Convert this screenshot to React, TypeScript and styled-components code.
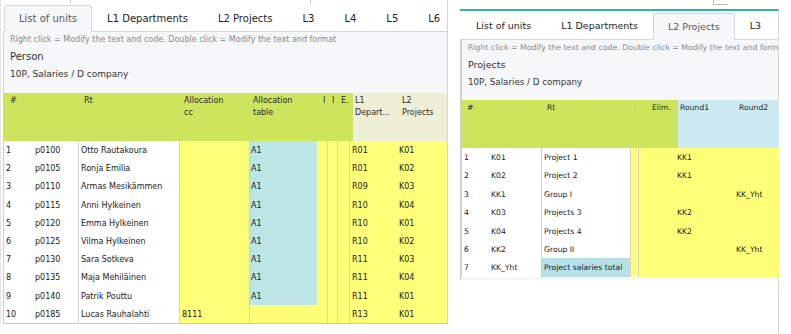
import React from 'react'
import styled, { createGlobalStyle } from 'styled-components'

const GlobalStyle = createGlobalStyle`
  html, body {
    margin: 0;
    padding: 0;
    background: #fff;
  }
  body {
    font-family: 'DejaVu Sans', Verdana, sans-serif;
    color: #222;
  }
`

const colors = {
  green: '#cde55c',
  yellow: '#ffff78',
  blue: '#bde5e6',
  paleHead: '#eef0d5',
  blueHead: '#cbeaf1',
  blueCell: '#b7e1e7',
  panel: '#f6f7f9',
  line: '#d6d6d6',
  teal: '#2db5a3',
}

const Page = styled.div`
  display: flex;
  align-items: flex-start;
  width: 791px;
  height: 334px;
  overflow: hidden;
`

const LeftPanel = styled.div`
  width: 448px;
  box-sizing: border-box;
  border-left: 1px solid #e4e4e4;
  border-right: 1px solid ${colors.line};
  padding-left: 2px;
`

const TopStrip = styled.div<{ height: number }>`
  display: flex;
  height: ${({ height }) => height}px;
`

const Tick = styled.div<{ offset: number }>`
  width: 1px;
  height: 100%;
  margin-left: ${({ offset }) => offset}px;
  background: #d4d4d4;
`

const CornerBox = styled.div<{ offset: number }>`
  width: 14px;
  height: 4px;
  margin-left: ${({ offset }) => offset}px;
  border-left: 1px solid #bbb;
  border-bottom: 1px solid #bbb;
`

const TabBar = styled.div<{ height: number; size: number }>`
  display: flex;
  align-items: flex-end;
  height: ${({ height }) => height}px;
  border-bottom: 1px solid ${colors.line};
  font-size: ${({ size }) => size}px;
  padding-left: 1px;
`

const Tab = styled.div<{ active?: boolean; top?: number }>`
  display: flex;
  align-items: center;
  box-sizing: border-box;
  height: calc(100% + 1px - ${({ top }) => top ?? 0}px);
  padding: 0 14px 1px;
  margin-bottom: -1px;
  border: 1px solid ${({ active }) => (active ? colors.line : 'transparent')};
  border-bottom: none;
  border-radius: 3px 3px 0 0;
  background: ${({ active }) => (active ? colors.panel : 'transparent')};
  color: ${({ active }) => (active ? '#5a5a5a' : '#1e1e1e')};
  white-space: nowrap;
`

const Content = styled.div<{ height: number; pad: number }>`
  height: ${({ height }) => height}px;
  box-sizing: border-box;
  padding: 2px 0 0 ${({ pad }) => pad}px;
  background: ${colors.panel};
  border-left: 1px solid #cfcfcf;
  overflow: hidden;
`

const Hint = styled.div<{ size: number }>`
  font-size: ${({ size }) => size}px;
  line-height: 12px;
  color: #8a8a8a;
  white-space: nowrap;
`

const Title = styled.div<{ size: number }>`
  margin-top: 3px;
  font-size: ${({ size }) => size}px;
  line-height: 16px;
  color: #333;
`

const Sub = styled.div<{ size: number }>`
  margin-top: 2px;
  font-size: ${({ size }) => size}px;
  line-height: 14px;
  color: #333;
`

const Table = styled.div<{ size: number }>`
  border-left: 1px solid #cfcfcf;
  font-size: ${({ size }) => size}px;
`

const HeaderRow = styled.div<{ cols: string }>`
  display: grid;
  grid-template-columns: ${({ cols }) => cols};
  height: 48px;
`

const HeadCell = styled.div<{ bg: string; pad?: number; right?: number }>`
  background: ${({ bg }) => bg};
  padding: 2px ${({ right }) => right ?? 0}px 0 ${({ pad }) => pad ?? 3}px;
  text-align: ${({ right }) => (right !== undefined ? 'right' : 'left')};
  line-height: 12px;
  color: #2a2a2a;
  white-space: nowrap;
  overflow: hidden;
`

const Body = styled.div<{ last?: boolean }>`
  border-bottom: ${({ last }) => (last ? `1px solid #c8c8c8` : 'none')};
`

const Row = styled.div<{ cols: string; height: number }>`
  display: grid;
  grid-template-columns: ${({ cols }) => cols};
  height: ${({ height }) => height}px;
`

const Cell = styled.div<{ bg?: string; line?: boolean; pad?: number }>`
  background: ${({ bg }) => bg || '#fff'};
  border-left: ${({ line }) => (line ? '1px solid #d0d0d0' : 'none')};
  padding-left: ${({ pad }) => pad ?? 2}px;
  padding-top: 1px;
  line-height: 17px;
  color: #1a1a1a;
  white-space: nowrap;
  overflow: hidden;
`

const RightColumn = styled.div`
  display: flex;
  flex-direction: column;
  margin-left: 12px;
  width: 319px;
  height: 334px;
`

const RightPanel = styled.div`
  flex: 1;
  box-sizing: border-box;
  border-right: 1px solid ${colors.line};
  border-top: 2px solid ${colors.teal};
`

const Card = styled.div`
  padding-bottom: 3px;
  background: ${colors.panel};
  border-left: 1px solid #cfcfcf;
`

const leftCols = '28px 46px 101px 70px 68px 10px 10px 12px 48px 50px'
const leftHead = '76px 100px 69px 71px 9px 9px 15px 46px 48px'

const people = [
  ['1', 'p0100', 'Otto Rautakoura', '', 'A1', 'R01', 'K01'],
  ['2', 'p0105', 'Ronja Emilia', '', 'A1', 'R01', 'K02'],
  ['3', 'p0110', 'Armas Mesikämmen', '', 'A1', 'R09', 'K03'],
  ['4', 'p0115', 'Anni Hylkeinen', '', 'A1', 'R10', 'K04'],
  ['5', 'p0120', 'Emma Hylkeinen', '', 'A1', 'R10', 'K01'],
  ['6', 'p0125', 'Vilma Hylkeinen', '', 'A1', 'R10', 'K02'],
  ['7', 'p0130', 'Sara Sotkeva', '', 'A1', 'R11', 'K03'],
  ['8', 'p0135', 'Maja Mehiläinen', '', 'A1', 'R11', 'K04'],
  ['9', 'p0140', 'Patrik Pouttu', '', 'A1', 'R11', 'K01'],
  ['10', 'p0185', 'Lucas Rauhalahti', '8111', '', 'R13', 'K01'],
]

const rightCols = '26px 53px 89px 8px 37px 58px 46px'
const rightHead = '80px 91px 5px 40px 58px 43px'

const projects = [
  ['1', 'K01', 'Project 1', 'KK1', ''],
  ['2', 'K02', 'Project 2', 'KK1', ''],
  ['3', 'KK1', 'Group I', '', 'KK_Yht'],
  ['4', 'K03', 'Projects 3', 'KK2', ''],
  ['5', 'K04', 'Projects 4', 'KK2', ''],
  ['6', 'KK2', 'Group II', '', 'KK_Yht'],
  ['7', 'KK_Yht', 'Project salaries total', '', ''],
]

const hint = 'Right click = Modify the text and code. Double click = Modify the text and format'

export default function App() {
  return (
    <Page>
      <GlobalStyle />
      <LeftPanel>
        <TopStrip height={5}>
          <Tick offset={67} />
          <Tick offset={239} />
        </TopStrip>
        <TabBar height={26} size={10}>
          <Tab active>List of units</Tab>
          <Tab>L1 Departments</Tab>
          <Tab>L2 Projects</Tab>
          <Tab>L3</Tab>
          <Tab>L4</Tab>
          <Tab>L5</Tab>
          <Tab>L6</Tab>
        </TabBar>
        <Content height={61} pad={6}>
          <Hint size={8}>{hint}</Hint>
          <Title size={10}>Person</Title>
          <Sub size={9}>10P, Salaries / D company</Sub>
        </Content>
        <Table size={8}>
          <HeaderRow cols={leftHead}>
            <HeadCell bg={colors.green} pad={6}>#</HeadCell>
            <HeadCell bg={colors.green} pad={4}>Rt</HeadCell>
            <HeadCell bg={colors.green} pad={4}>
              Allocation
              <br />
              cc
            </HeadCell>
            <HeadCell bg={colors.green} pad={4}>
              Allocation
              <br />
              table
            </HeadCell>
            <HeadCell bg={colors.green}>I</HeadCell>
            <HeadCell bg={colors.green}>I</HeadCell>
            <HeadCell bg={colors.green}>E.</HeadCell>
            <HeadCell bg={colors.paleHead} pad={2}>
              L1
              <br />
              Depart...
            </HeadCell>
            <HeadCell bg={colors.paleHead} pad={3}>
              L2
              <br />
              Projects
            </HeadCell>
          </HeaderRow>
          <Body last>
            {people.map(([n, code, name, cc, table, l1, l2]) => (
              <Row key={n} cols={leftCols} height={18.2}>
                <Cell>{n}</Cell>
                <Cell pad={3}>{code}</Cell>
                <Cell line>{name}</Cell>
                <Cell bg={colors.yellow} line>
                  {cc}
                </Cell>
                <Cell bg={table ? colors.blue : colors.yellow} line pad={1}>
                  {table}
                </Cell>
                <Cell bg={colors.yellow} />
                <Cell bg={colors.yellow} line />
                <Cell bg={colors.yellow} line />
                <Cell bg={colors.yellow} line>
                  {l1}
                </Cell>
                <Cell bg={colors.yellow}>{l2}</Cell>
              </Row>
            ))}
          </Body>
        </Table>
      </LeftPanel>

      <RightColumn>
        <TopStrip height={9}>
          <CornerBox offset={253} />
        </TopStrip>
        <RightPanel>
          <TabBar height={28} size={9.5}>
            <Tab>List of units</Tab>
            <Tab>L1 Departments</Tab>
            <Tab active top={2}>
              L2 Projects
            </Tab>
            <Tab>L3</Tab>
          </TabBar>
          <Card>
            <Content height={60} pad={6}>
              <Hint size={7.8}>{hint}</Hint>
              <Title size={9.5}>Projects</Title>
              <Sub size={8.7}>10P, Salaries / D company</Sub>
            </Content>
            <Table size={7.7}>
              <HeaderRow cols={rightHead}>
                <HeadCell bg={colors.green} pad={5}>#</HeadCell>
                <HeadCell bg={colors.green} pad={5}>Rt</HeadCell>
                <HeadCell bg={colors.green} pad={1}>
                  <span style={{ color: '#b8c98a' }}>|</span>
                </HeadCell>
                <HeadCell bg={colors.green} right={7}>
                  Elim.
                </HeadCell>
                <HeadCell bg={colors.blueHead} pad={2}>Round1</HeadCell>
                <HeadCell bg={colors.blueHead} pad={3}>Round2</HeadCell>
              </HeaderRow>
              <Body>
                {projects.map(([n, code, name, r1, r2]) => (
                  <Row key={n} cols={rightCols} height={18.4}>
                    <Cell>{n}</Cell>
                    <Cell pad={3}>{code}</Cell>
                    <Cell line bg={n === '7' ? colors.blueCell : '#fff'}>
                      {name}
                    </Cell>
                    <Cell bg={colors.yellow} line />
                    <Cell bg={colors.yellow} line />
                    <Cell bg={colors.yellow}>{r1}</Cell>
                    <Cell bg={colors.yellow} pad={3}>
                      {r2}
                    </Cell>
                  </Row>
                ))}
              </Body>
            </Table>
          </Card>
        </RightPanel>
      </RightColumn>
    </Page>
  )
}
